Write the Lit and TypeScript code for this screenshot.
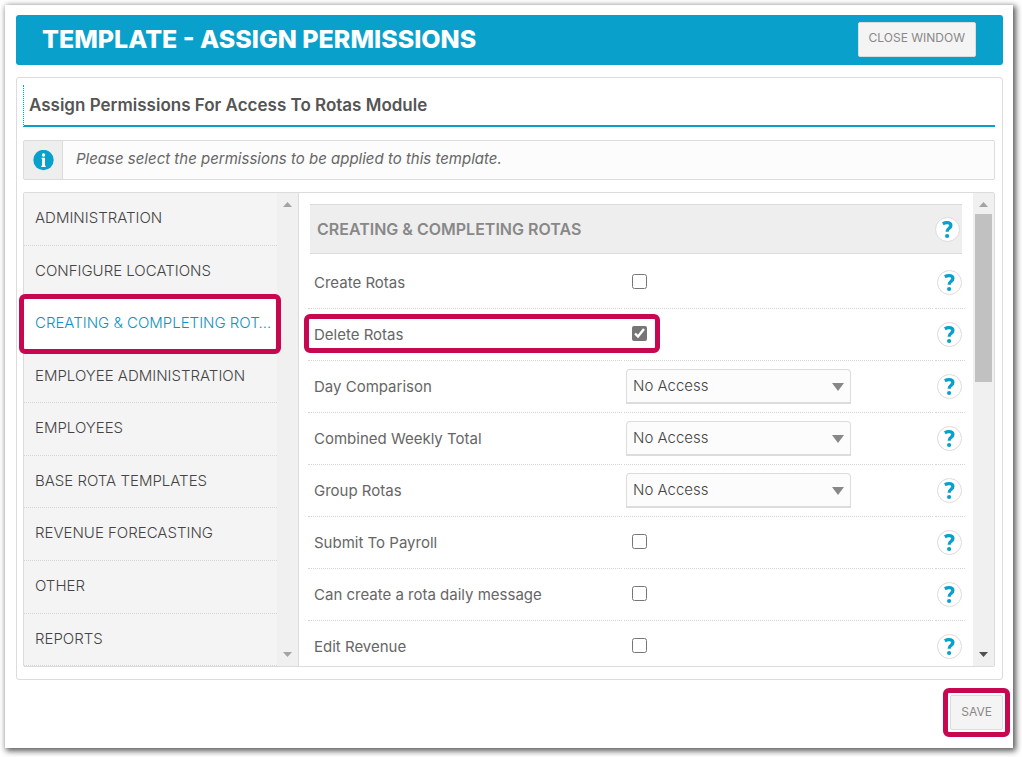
import { LitElement, html, css, svg, nothing } from "lit";
import { customElement, property, state } from "lit/decorators.js";
import { classMap } from "lit/directives/class-map.js";

type Permission = { id: string; label: string; kind: "check" | "select"; checked?: boolean; marked?: boolean };

const SECTIONS = [
  "ADMINISTRATION",
  "CONFIGURE LOCATIONS",
  "CREATING & COMPLETING ROTAS",
  "EMPLOYEE ADMINISTRATION",
  "EMPLOYEES",
  "BASE ROTA TEMPLATES",
  "REVENUE FORECASTING",
  "OTHER",
  "REPORTS",
];

const PERMISSIONS: Permission[] = [
  { id: "create", label: "Create Rotas", kind: "check" },
  { id: "delete", label: "Delete Rotas", kind: "check", checked: true, marked: true },
  { id: "day", label: "Day Comparison", kind: "select" },
  { id: "weekly", label: "Combined Weekly Total", kind: "select" },
  { id: "group", label: "Group Rotas", kind: "select" },
  { id: "payroll", label: "Submit To Payroll", kind: "check" },
  { id: "message", label: "Can create a rota daily message", kind: "check" },
  { id: "revenue", label: "Edit Revenue", kind: "check" },
];

@customElement("help-button")
class HelpButton extends LitElement {
  static styles = css`
    :host { display: block; }
    .help {
      display: block;
      box-sizing: border-box;
      width: 25px;
      height: 25px;
      padding: 0;
      border: 1px solid #dcdcdc;
      border-radius: 50%;
      background: #fff;
      cursor: pointer;
    }
    .glyph { display: block; width: 23px; height: 23px; }
  `;
  render() {
    return html`<button class="help" type="button" aria-label="Help">
      <svg class="glyph" viewBox="0 0 23 23" aria-hidden="true">
        <path d="M6.8 5.7 C8.2 5 9.6 4.7 11 4.7 C13.6 4.7 14.9 5.8 14.9 7.6 C14.9 10.4 11.1 10.3 11.1 13.8" fill="none" stroke="#09a1cc" stroke-width="3.3"/>
        <circle cx="11.1" cy="18" r="2.1" fill="#09a1cc"/>
      </svg>
    </button>`;
  }
}

@customElement("scroll-track")
class ScrollTrack extends LitElement {
  @property({ type: Boolean }) thumb = false;
  static styles = css`
    :host {
      display: flex;
      flex-direction: column;
      align-items: center;
      width: 21px;
      flex: none;
      background: #f0f0f0;
    }
    .arrow { display: block; width: 9px; height: 5px; margin: 9px 0 7px; flex: none; fill: #a3a3a3; }
    .down { margin: auto 0 9px; }
    .dark { fill: #505050; }
    .thumb { width: 17px; height: 168px; background: #c1c1c1; }
  `;
  render() {
    return html`
      <svg class="arrow" viewBox="0 0 9 5">${svg`<path d="M4.5 0L9 5H0z"/>`}</svg>
      ${this.thumb ? html`<div class="thumb"></div>` : nothing}
      <svg class=${classMap({ arrow: true, down: true, dark: this.thumb })} viewBox="0 0 9 5">${svg`<path d="M0 0H9L4.5 5z"/>`}</svg>
    `;
  }
}

@customElement("app-root")
class AppRoot extends LitElement {
  @state() private active = 2;

  static styles = css`
    :host {
      display: block;
      box-sizing: border-box;
      height: 100vh;
      padding: 5px 9px 9px 5px;
      background: #fff;
      color: #555;
      font: 300 15px/20px Inter, "Liberation Sans", sans-serif;
    }
    *, *::after { box-sizing: border-box; }
    .window {
      display: flex;
      flex-direction: column;
      height: 100%;
      padding: 10px 10px 10px 11px;
      background: #fff;
      box-shadow: 2px 2px 6px 1px rgba(0, 0, 0, 0.65);
    }
    .titlebar {
      display: flex;
      align-items: center;
      justify-content: space-between;
      height: 50px;
      flex: none;
      padding: 0 27px 2px 26px;
      border-radius: 3px;
      background: #09a1cc;
    }
    .title { margin: 0; color: #fff; font-size: 25px; line-height: 30px; font-weight: 800; }
    .button {
      height: 35px;
      padding: 0 10px 2px;
      border: 1px solid #dcdcdc;
      border-radius: 2px;
      background: #f4f4f4;
      color: #888;
      font: 400 12px/20px Inter, "Liberation Sans", sans-serif;
    }
    .panel {
      display: flex;
      flex-direction: column;
      flex: 1;
      min-height: 0;
      margin-top: 12px;
      padding: 7px 7px 12px 6px;
      border: 1px solid #dcdcdc;
      border-radius: 3px;
    }
    .subtitle {
      margin: 0;
      padding: 10px 0 10px 5px;
      border-left: 1px dotted #09a1cc;
      border-bottom: 2px solid #09a1cc;
      font-size: 17px;
      line-height: 20px;
      font-weight: 600;
    }
    .notice {
      display: flex;
      flex: none;
      height: 40px;
      margin: 13px 0 12px;
      border: 1px solid #dcdcdc;
      border-radius: 2px;
      background: #fcfcfc;
    }
    .notice-icon {
      display: grid;
      place-items: center;
      width: 39px;
      border-right: 1px solid #dcdcdc;
      background: #eee;
    }
    .info { width: 21px; height: 21px; }
    .notice-text { margin: 0; padding: 8px 13px; color: #666; font-style: italic; font-weight: 400; }
    .split {
      display: flex;
      flex: 1;
      min-height: 0;
      border: 1px solid #dcdcdc;
      border-radius: 2px;
    }
    .sidebar { display: flex; flex: none; width: 275px; border-right: 1px solid #dcdcdc; background: #f4f4f4; }
    .sections { display: flex; flex-direction: column; flex: 1; min-width: 0; margin: 0; padding: 0; list-style: none; }
    .section { position: relative; display: flex; flex: 1; border-bottom: 1px dotted #d4d4d4; }
    .section-link {
      display: block;
      flex: 1;
      align-self: stretch;
      padding: 15px 5px 0 11px;
      overflow: hidden;
      color: #444;
      text-decoration: none;
      text-overflow: ellipsis;
      white-space: nowrap;
    }
    .current .section-link { background: #fff; color: #0c93c4; }
    .current::after, .marked::after {
      content: "";
      position: absolute;
      inset: -4px -4px -4px -5px;
      border: 5px solid #c70850;
      border-radius: 6px;
      pointer-events: none;
      z-index: 1;
    }
    .marked::after { inset: 5px auto 8px -4px; width: 356px; }
    .content { flex: 1; min-width: 0; padding: 11px 8px 0 9px; overflow: hidden; }
    .content-head {
      display: flex;
      align-items: center;
      justify-content: space-between;
      height: 50px;
      margin: 0 3px 3px 2px;
      padding: 0 2px 0 7px;
      border: solid #dcdcdc;
      border-width: 1px 0;
      background: #eee;
    }
    .content-title { margin: 0; color: #888; font-size: 16px; line-height: 20px; font-weight: 600; }
    .row { position: relative; display: grid; grid-template-columns: 314px 1fr 30px; column-gap: 2px; height: 52px; }
    .cell { display: flex; align-items: center; border-bottom: 1px dotted #d4d4d4; }
    .label { padding: 0 0 0 6px; color: #666; font-weight: 400; }
    .control { padding-left: 2px; }
    .check { width: 15px; height: 15px; margin: 0 6px 2px; accent-color: #767676; }
    .help-cell { padding: 0 0 0 2px; }
    .picker { position: relative; width: 225px; }
    .select {
      display: block;
      width: 100%;
      height: 35px;
      padding: 0 30px 0 6px;
      appearance: none;
      border: 1px solid #dcdcdc;
      border-bottom-width: 2px;
      border-radius: 4px 4px 0 0;
      background: #fcfcfc;
      color: #444;
      font: inherit;
    }
    .caret { position: absolute; right: 7px; top: 14px; width: 12px; height: 8px; fill: #888; pointer-events: none; }
    .footer { display: flex; justify-content: flex-end; flex: none; margin-top: 15px; padding-bottom: 8px; }
    .save { position: relative; }
    .save::after {
      content: "";
      position: absolute;
      inset: -8px;
      border: 5px solid #c70850;
      border-radius: 6px;
      pointer-events: none;
    }
  `;

  private pick(event: Event, index: number) {
    event.preventDefault();
    this.active = index;
  }

  private renderControl(item: Permission) {
    if (item.kind === "check") {
      return html`<input class="check" type="checkbox" id=${item.id} ?checked=${item.checked ?? false} />`;
    }
    return html`<div class="picker">
      <select class="select" id=${item.id}>
        <option>No Access</option>
        <option>View</option>
        <option>Edit</option>
      </select>
      <svg class="caret" viewBox="0 0 12 8" aria-hidden="true"><path d="M0 0H12L6 8z" /></svg>
    </div>`;
  }

  render() {
    return html`<main class="window">
      <header class="titlebar">
        <h1 class="title">TEMPLATE - ASSIGN PERMISSIONS</h1>
        <button class="button" type="button">CLOSE WINDOW</button>
      </header>
      <section class="panel">
        <h2 class="subtitle">Assign Permissions For Access To Rotas Module</h2>
        <div class="notice">
          <div class="notice-icon">
            <svg class="info" viewBox="0 0 21 21" aria-hidden="true">
              <circle cx="10.5" cy="10" r="10.2" fill="#09a1cc" />
              <circle cx="10.5" cy="5" r="1.7" fill="#fff" />
              <path d="M8.6 7.8H12V15.7H12.7V17H8.3V15.7H9V9H8.6z" fill="#fff" />
            </svg>
          </div>
          <p class="notice-text">Please select the permissions to be applied to this template.</p>
        </div>
        <div class="split">
          <nav class="sidebar">
            <ul class="sections">
              ${SECTIONS.map(
                (name, i) => html`<li class=${classMap({ section: true, current: i === this.active })}>
                  <a class="section-link" href="#" @click=${(e: Event) => this.pick(e, i)}>${name}</a>
                </li>`
              )}
            </ul>
            <scroll-track></scroll-track>
          </nav>
          <div class="content">
            <div class="content-head">
              <h3 class="content-title">CREATING &amp; COMPLETING ROTAS</h3>
              <help-button></help-button>
            </div>
            ${PERMISSIONS.map(
              (item) => html`<div class=${classMap({ row: true, marked: !!item.marked })}>
                <label class="cell label" for=${item.id}>${item.label}</label>
                <div class="cell control">${this.renderControl(item)}</div>
                <div class="cell help-cell"><help-button></help-button></div>
              </div>`
            )}
          </div>
          <scroll-track thumb></scroll-track>
        </div>
      </section>
      <footer class="footer">
        <button class="button save" type="button">SAVE</button>
      </footer>
    </main>`;
  }
}
